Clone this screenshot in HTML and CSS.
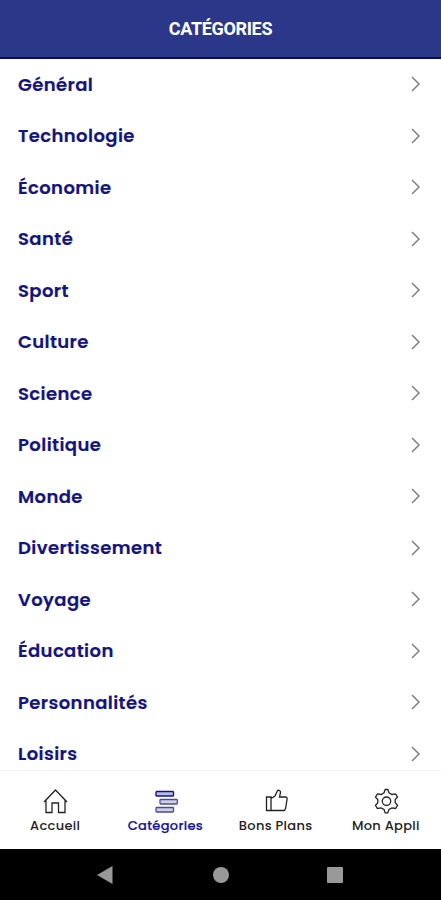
FILE: index.html
```html
<!DOCTYPE html>
<html lang="fr">
  <head>
    <meta charset="UTF-8" />
    <meta name="viewport" content="width=device-width, initial-scale=1.0" />
    <title>Catégories</title>
    <link rel="stylesheet" href="styles.css" />
  </head>

  <body>
    <svg class="symbols">
      <symbol id="chevron" viewBox="0 0 10 16">
        <path d="M1 1l7 7-7 7" />
      </symbol>
    </svg>

    <header class="header">
      <h1>CATÉGORIES</h1>
    </header>

    <main class="list">
      <a class="row"><span>Général</span><svg class="chevron"><use href="#chevron" /></svg></a>
      <a class="row"><span>Technologie</span><svg class="chevron"><use href="#chevron" /></svg></a>
      <a class="row"><span>Économie</span><svg class="chevron"><use href="#chevron" /></svg></a>
      <a class="row"><span>Santé</span><svg class="chevron"><use href="#chevron" /></svg></a>
      <a class="row"><span>Sport</span><svg class="chevron"><use href="#chevron" /></svg></a>
      <a class="row"><span>Culture</span><svg class="chevron"><use href="#chevron" /></svg></a>
      <a class="row"><span>Science</span><svg class="chevron"><use href="#chevron" /></svg></a>
      <a class="row"><span>Politique</span><svg class="chevron"><use href="#chevron" /></svg></a>
      <a class="row"><span>Monde</span><svg class="chevron"><use href="#chevron" /></svg></a>
      <a class="row"><span>Divertissement</span><svg class="chevron"><use href="#chevron" /></svg></a>
      <a class="row"><span>Voyage</span><svg class="chevron"><use href="#chevron" /></svg></a>
      <a class="row"><span>Éducation</span><svg class="chevron"><use href="#chevron" /></svg></a>
      <a class="row"><span>Personnalités</span><svg class="chevron"><use href="#chevron" /></svg></a>
      <a class="row"><span>Loisirs</span><svg class="chevron"><use href="#chevron" /></svg></a>
    </main>

    <nav class="tabs">
      <a class="tab">
        <svg viewBox="0 0 26 26">
          <path d="M2 14L13.500 2 25 14M4 12.500v12h6V15h6.500v9.500H23v-12" />
        </svg>
        <span>Accueil</span>
      </a>
      <a class="tab active">
        <svg viewBox="0 0 26 26">
          <rect class="bar-full" x="4" y="3.500" width="17.500" height="4.500" rx="0.800" />
          <rect class="bar" x="8" y="11.500" width="17.300" height="4.500" rx="0.800" />
          <rect class="bar" x="4" y="19.500" width="17.500" height="4.500" rx="0.800" />
        </svg>
        <span>Catégories</span>
      </a>
      <a class="tab">
        <svg viewBox="0 0 26 26">
          <path d="M3.500 9h4.500v13.500H3.500zM8 10.500l4-2.500 2.300-5c.5-1.200 3.400-1 3.200 1.500L16.500 9h5.800c1.500 0 2 .8 1.800 2l-1.500 9.300c-.3 1.500-1 2.200-2.400 2.200H8" />
        </svg>
        <span>Bons Plans</span>
      </a>
      <a class="tab">
        <svg viewBox="0 0 26 26">
          <path d="M12.200 1.500h2.600l1.200 3.400 2.900 1.600 3.700-.6 1.900 3.200-2.300 2.500v3.200l2.300 2.500-1.900 3.200-3.700-.6-2.900 1.600-1.200 3.400h-2.600L11 21.500l-2.900-1.600-3.700.6-1.900-3.200 2.300-2.500v-3.200L2.500 9.100l1.900-3.200 3.700.6L11 4.900z" />
          <circle cx="13.500" cy="13.200" r="4.200" />
        </svg>
        <span>Mon Appli</span>
      </a>
    </nav>

    <footer class="system-bar">
      <svg viewBox="0 0 18 18"><path d="M1 9L16.500 0v18z" /></svg>
      <svg viewBox="0 0 18 18"><circle cx="10" cy="9" r="8" /></svg>
      <svg viewBox="0 0 18 18"><rect x="1" y="1" width="16" height="16" rx="1" /></svg>
    </footer>
  </body>
</html>
```
FILE: styles.css
```css
* {
  margin: 0;
  padding: 0;
  box-sizing: border-box;
}

body {
  width: 100%;
  height: 100vh;
  display: flex;
  flex-direction: column;
  overflow: hidden;
  background-color: white;
  font-family: Poppins, Inter, sans-serif;
}

.symbols {
  display: none;
}

.header {
  height: 59px;
  flex-shrink: 0;
  display: flex;
  justify-content: center;
  align-items: center;
  background-color: #2b388a;
  border-bottom: 2px solid #09096c;
}

.header h1 {
  color: white;
  font-family: Roboto, sans-serif;
  font-size: 18px;
  font-weight: 700;
  letter-spacing: -0.35px;
}

.list {
  flex: 1;
  min-height: 0;
  overflow: hidden;
}

.row {
  height: 51.5px;
  padding: 0 20px 1px 18px;
  display: flex;
  justify-content: space-between;
  align-items: center;
  color: #14147e;
  font-size: 18px;
  font-weight: 600;
  letter-spacing: 0.4px;
  -webkit-text-stroke: 0.2px #14147e;
}

.chevron {
  width: 10px;
  height: 16px;
  fill: none;
  stroke: #808080;
  stroke-width: 1.5;
}

.tabs {
  height: 79px;
  flex-shrink: 0;
  display: grid;
  grid-template-columns: repeat(4, 1fr);
  border-top: 1px solid #f3f3f3;
}

.tab {
  padding-top: 17px;
  display: flex;
  flex-direction: column;
  align-items: center;
  color: #222;
  font-size: 13px;
  font-weight: 500;
  line-height: 20px;
  letter-spacing: 0.3px;
  white-space: nowrap;
}

.tab svg {
  width: 26px;
  height: 26px;
  margin-bottom: 2px;
  fill: none;
  stroke: #222;
  stroke-width: 1.3;
}

.tab.active {
  color: #14149a;
  -webkit-text-stroke: 0.2px #14149a;
}

.tab.active svg {
  stroke: #4a4a9c;
}

.tab.active .bar-full {
  fill: #b3bce6;
  stroke: #14148a;
  stroke-width: 1.4;
}

.bar {
  fill: #cfcfe6;
}

.system-bar {
  height: 51px;
  flex-shrink: 0;
  padding: 0 97px 0 96px;
  display: flex;
  justify-content: space-between;
  align-items: center;
  background-color: black;
}

.system-bar svg {
  width: 18px;
  height: 18px;
  fill: #999;
}
```
